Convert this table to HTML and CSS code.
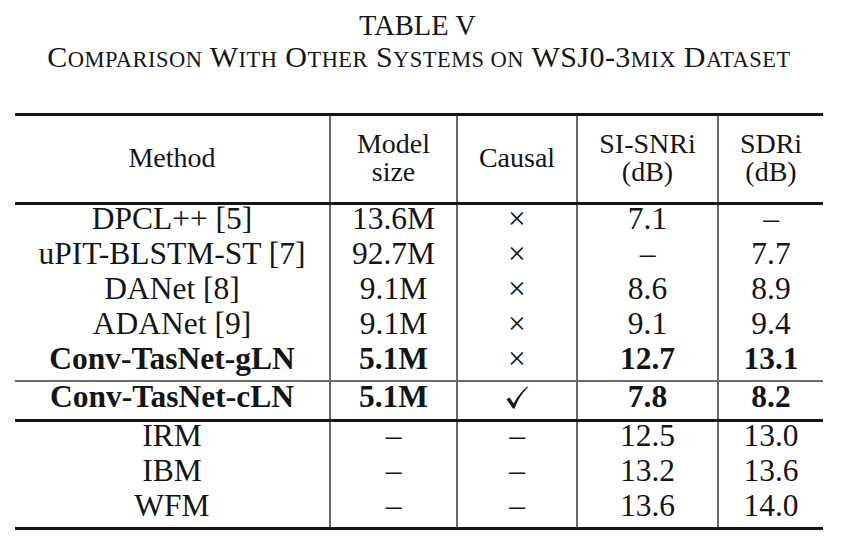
FILE: index.html
```html
<!DOCTYPE html>
<html>
<head>
    <title>Table V</title>
    <link rel="stylesheet" href="styles.css">
</head>
<body>
    <div class="heading">
        <div class="title"><span class="squeeze">TABLE V</span></div>
        <div class="caption">C<span class="sc">OMPARISON</span> W<span class="sc">ITH</span> O<span class="sc">THER</span> S<span class="sc">YSTEMS ON</span> WSJ0-3<span class="sc">MIX</span> D<span class="sc">ATASET</span></div>
    </div>

    <table class="results">
        <colgroup>
            <col class="c-method">
            <col class="c-size">
            <col class="c-causal">
            <col class="c-sisnr">
            <col class="c-sdr">
        </colgroup>
        <thead>
            <tr>
                <th>Method</th>
                <th>Model<br>size</th>
                <th>Causal</th>
                <th>SI-SNRi<br>(dB)</th>
                <th>SDRi<br>(dB)</th>
            </tr>
        </thead>
        <tbody>
            <tr>
                <td>DPCL++ [5]</td>
                <td>13.6M</td>
                <td class="mark">×</td>
                <td>7.1</td>
                <td>–</td>
            </tr>
            <tr>
                <td>uPIT-BLSTM-ST [7]</td>
                <td>92.7M</td>
                <td class="mark">×</td>
                <td>–</td>
                <td>7.7</td>
            </tr>
            <tr>
                <td>DANet [8]</td>
                <td>9.1M</td>
                <td class="mark">×</td>
                <td>8.6</td>
                <td>8.9</td>
            </tr>
            <tr>
                <td>ADANet [9]</td>
                <td>9.1M</td>
                <td class="mark">×</td>
                <td>9.1</td>
                <td>9.4</td>
            </tr>
            <tr class="ours">
                <td>Conv-TasNet-gLN</td>
                <td>5.1M</td>
                <td class="mark">×</td>
                <td>12.7</td>
                <td>13.1</td>
            </tr>
            <tr class="ours split">
                <td>Conv-TasNet-cLN</td>
                <td>5.1M</td>
                <td class="mark">
                    <svg class="check" viewBox="0 0 24 24" width="24" height="24">
                        <path d="M1.5 13.2 L4.6 11.4 L8.6 17.6 C12.2 10.6 17 4.6 22.6 0.6 L23.2 1.3 C17.6 6.4 13.2 13.2 9.6 22.6 L7.9 22.6 Z" fill="#1a1a1a"/>
                    </svg>
                </td>
                <td>7.8</td>
                <td>8.2</td>
            </tr>
        </tbody>
        <tbody class="oracle">
            <tr>
                <td>IRM</td>
                <td>–</td>
                <td>–</td>
                <td>12.5</td>
                <td>13.0</td>
            </tr>
            <tr>
                <td>IBM</td>
                <td>–</td>
                <td>–</td>
                <td>13.2</td>
                <td>13.6</td>
            </tr>
            <tr>
                <td>WFM</td>
                <td>–</td>
                <td>–</td>
                <td>13.6</td>
                <td>14.0</td>
            </tr>
        </tbody>
    </table>
</body>
</html>
```

FILE: styles.css
```css
body {
    margin: 0;
    background-color: #fff;
    color: #151515;
    font-family: 'Liberation Serif', 'Times New Roman', serif;
}

.heading {
    text-align: center;
    padding-top: 10px;
    padding-right: 16px;
    margin-bottom: 35px;
}

.title {
    font-size: 30px;
    line-height: 29px;
}

.squeeze {
    display: inline-block;
    transform: scaleX(0.95);
    white-space: nowrap;
}

.caption {
    font-size: 30px;
    line-height: 36px;
    letter-spacing: 0.45px;
    white-space: nowrap;
    margin-left: 4px;
}

.sc {
    font-size: 0.75em;
}

.results {
    margin-left: 15px;
    width: 808px;
    table-layout: fixed;
    border-collapse: collapse;
    border-top: 3px solid #151515;
    border-bottom: 3px solid #151515;
}

.c-method { width: 315px; }
.c-size { width: 127px; }
.c-causal { width: 120px; }
.c-sisnr { width: 141px; }
.c-sdr { width: 105px; }

.results th,
.results td {
    padding: 0;
    text-align: center;
    border-left: 2px solid #6a6a6a;
}

.results th:first-child,
.results td:first-child {
    border-left: none;
}

.results th {
    font-weight: normal;
    font-size: 28px;
    line-height: 28px;
    height: 84px;
    padding-bottom: 2px;
    border-bottom: 3px solid #151515;
}

.results tbody tr {
    height: 35px;
}

.results td {
    font-size: 31.5px;
    line-height: 27px;
    padding-bottom: 8px;
}

.results .mark {
    font-weight: normal;
}

.check {
    display: inline-block;
    vertical-align: -3px;
}

.ours td {
    font-weight: bold;
}

.split td {
    border-top: 2px solid #6a6a6a;
}

.results .split {
    height: 39px;
}

.oracle tr:first-child td {
    border-top: 3px solid #151515;
}
```
